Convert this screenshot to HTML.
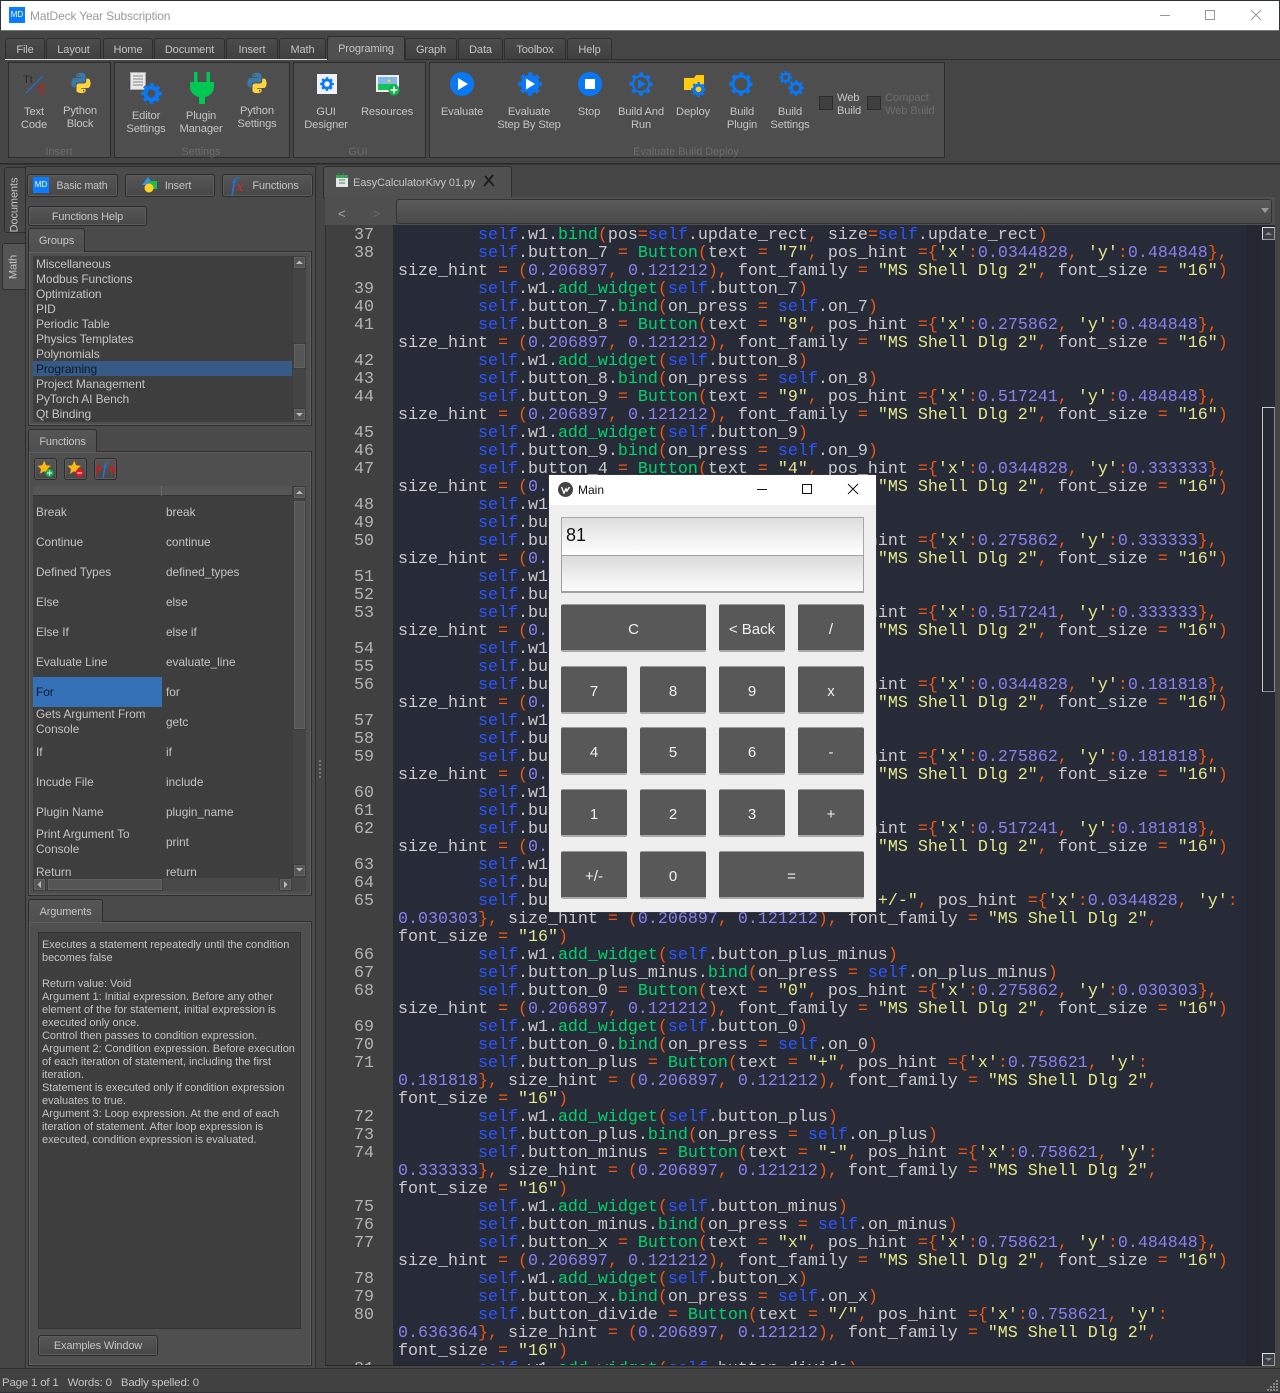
<!DOCTYPE html>
<html><head><meta charset="utf-8"><title>MatDeck Year Subscription</title>
<style>
*{box-sizing:border-box}
html,body{margin:0;padding:0;width:1280px;height:1393px;overflow:hidden;background:#454545}
body{position:relative;font-family:"Liberation Sans",sans-serif;font-size:11.2px;color:#c4c4c4}
div,svg,span.p{position:absolute}
.l{transform:translate(-50%,1px);text-align:center;white-space:pre;line-height:13px;letter-spacing:-.15px}
.t{white-space:pre;line-height:13px;letter-spacing:-.15px;transform:translateY(1px)}
.g{transform:translate(-50%,1px);color:#6c6c6c;white-space:pre;line-height:13px;font-size:10.8px}
.tab{top:38px;height:21px;background:linear-gradient(#4b4b4b,#3f3f3f);border:1px solid #2e2e2e;border-bottom:0;border-radius:3px 3px 0 0;text-align:center;line-height:22px;letter-spacing:-.1px;font-size:11px}
.grp{top:62px;height:96px;background:#4e4e4e;border:1px solid #2d2d2d}
.btn{background:linear-gradient(#565656,#474747);border:1px solid #2c2c2c;border-radius:3px;box-shadow:inset 0 0 0 1px #5c5c5c;text-align:center;letter-spacing:-.15px;font-size:11px}
.box{background:#4f4f4f;border:1px solid #2e2e2e;box-shadow:inset 0 0 0 1px #5e5e5e}
.ptab{background:linear-gradient(#555,#4f4f4f);border:1px solid #2e2e2e;border-bottom:0;border-radius:3px 3px 0 0;text-align:center;letter-spacing:-.15px;font-size:11px}
.it{left:36px;white-space:pre;line-height:15px;letter-spacing:-.1px;font-size:12px}
#ft .t{font-size:11.8px;letter-spacing:0;transform:none}
.sb{background:#555;border:1px solid #3c3c3c;box-shadow:inset 0 0 0 1px #626262}
pre{position:absolute;margin:0;font-family:"Liberation Mono",monospace;font-size:16.67px;line-height:18px}
#code{color:#c9c9c9}
#code a{color:#2c56ff}#code b{color:#00d36b;font-weight:400}#code s{color:#f2560c;text-decoration:none}
#code i{color:#8a80ee;font-style:normal}#code u{color:#e4e88a;text-decoration:none}
.k{background:#585858;border-top:1px solid #999;border-bottom:2px solid #a8a8a8;border-radius:2px;color:#f0f0f0;text-align:center;font-size:15px;line-height:49px}
</style></head><body>
<svg width="0" height="0" style="position:absolute">
<defs>
<symbol id="gear" viewBox="0 0 24 24"><circle cx="12" cy="12" r="7" fill="none" stroke="#0a78f5" stroke-width="4.6"/><circle cx="12" cy="12" r="10" fill="none" stroke="#0a78f5" stroke-width="3.6" stroke-dasharray="3.95 3.9" stroke-dashoffset="2"/></symbol>
<symbol id="py" viewBox="0 0 24 24"><path id="pb" fill="#3c78a9" d="M11.9 1C6.6 1 7 3.3 7 3.3V5.7h5v.8H5S1.6 6.1 1.6 11.6 4.5 16.8 4.5 16.8H6.3V14.3s-.1-2.9 2.9-2.9h5s2.7 0 2.7-2.7V3.9S17.4 1 11.9 1zM9.1 2.6a.9.9 0 1 1 0 1.8.9.9 0 0 1 0-1.8z"/><path fill="#fdd43f" transform="rotate(180 12 12)" d="M11.9 1C6.6 1 7 3.3 7 3.3V5.7h5v.8H5S1.6 6.1 1.6 11.6 4.5 16.8 4.5 16.8H6.3V14.3s-.1-2.9 2.9-2.9h5s2.7 0 2.7-2.7V3.9S17.4 1 11.9 1zM9.1 2.6a.9.9 0 1 1 0 1.8.9.9 0 0 1 0-1.8z"/></symbol>
<symbol id="star" viewBox="0 0 20 20"><path fill="#fdb813" stroke="#b5762a" stroke-width=".6" d="M9 1l2.5 5.6 6 .6-4.5 4 1.3 6L9 14.1 3.700 17.200 5 11.200.5 7.200l6-.6z"/></symbol>
</defs></svg>

<!-- title bar -->
<div style="left:0;top:0;width:1280px;height:31px;background:#fff;border-top:1px solid #2c3338;border-left:1px solid #2c3338;border-right:1px solid #2c3338;border-bottom:1px solid #777"></div>
<div style="left:9px;top:7px;width:16px;height:16px;background:#0a7cff;color:#fff;font-size:8px;line-height:16px;text-align:center">MD</div>
<div class="t" style="left:30px;top:9px;font-size:12px;color:#9a9a9a">MatDeck Year Subscription</div>
<svg style="left:1150px;top:5px" width="125" height="22" fill="none" stroke="#999" stroke-width="1"><path d="M10 10.500h10"/><rect x="55.500" y="5.500" width="9" height="9"/><path d="M101 5l10 10M111 5l-10 10"/></svg>

<!-- ribbon tabs -->
<div style="left:5px;top:59px;width:322px;height:1px;background:#ddd"></div>
<div style="left:404px;top:59px;width:876px;height:1px;background:#2e2e2e"></div>
<div class="tab" style="left:5px;width:40px">File</div>
<div class="tab" style="left:46px;width:55px">Layout</div>
<div class="tab" style="left:103px;width:50px">Home</div>
<div class="tab" style="left:154px;width:71px">Document</div>
<div class="tab" style="left:226px;width:52px">Insert</div>
<div class="tab" style="left:279px;width:47px">Math</div>
<div class="tab" style="left:327px;top:36px;width:78px;height:24px;background:#505050;line-height:24px;z-index:2">Programing</div>
<div class="tab" style="left:405px;width:52px">Graph</div>
<div class="tab" style="left:458px;width:45px">Data</div>
<div class="tab" style="left:504px;width:62px">Toolbox</div>
<div class="tab" style="left:567px;width:45px">Help</div>

<!-- ribbon -->
<div class="grp" style="left:8px;width:103px"></div>
<div class="grp" style="left:114px;width:176px"></div>
<div class="grp" style="left:293px;width:133px"></div>
<div class="grp" style="left:429px;width:516px"></div>
<div style="left:0;top:163px;width:1280px;height:2px;background:#353535;border-top:1px solid #2a2a2a"></div>

<!-- icons -->
<svg style="left:22px;top:72px" width="26" height="24"><text x="1" y="11" font-family="Liberation Sans" font-size="11" fill="#2b2b33">Tt</text><path d="M4 21L21 4" stroke="#1f6fe0" stroke-width="1.200"/><text x="16" y="20" font-family="Liberation Sans" font-size="11" fill="#d01818">{}</text></svg>
<svg style="left:70px;top:72px" width="22" height="22"><use href="#py"/></svg>
<svg style="left:130px;top:72px" width="34" height="34"><rect x=".500" y=".500" width="15" height="17" fill="#e8e8e8" stroke="#aaa"/><path d="M3 4h10M3 7h10M3 10h10M3 13h10" stroke="#888"/><use href="#gear" x="11" y="11" width="21" height="21"/></svg>
<svg style="left:190px;top:71px" width="24" height="34"><path fill="#00c853" d="M4 1h3.500v10h9V1H20v10h4v5c0 5-4 9-9 10v7h-6v-7C4 25 0 21 0 16v-5h4z"/></svg>
<svg style="left:246px;top:72px" width="22" height="22"><use href="#py"/></svg>
<svg style="left:317px;top:74px" width="20" height="20"><rect width="20" height="20" fill="#eef2f6"/><use href="#gear" x="3" y="3" width="14" height="14"/></svg>
<svg style="left:376px;top:75px" width="25" height="22"><rect width="23" height="17" fill="#eee"/><rect x="2" y="2" width="19" height="7" fill="#7fb8ea"/><rect x="2" y="9" width="19" height="6" fill="#16c25a"/><circle cx="13" cy="6" r="1.500" fill="#f4d24a"/><circle cx="18" cy="15" r="5.500" fill="#0fb14d"/><path d="M18 11.500v7M14.500 15h7" stroke="#fff" stroke-width="1.500"/></svg>
<svg style="left:450px;top:72px" width="24" height="24"><circle cx="12" cy="12" r="12" fill="#0a78f5"/><path d="M8 6l10 6-10 6z" fill="#fff"/></svg>
<svg style="left:518px;top:72px" width="24" height="24"><use href="#gear"/><circle cx="12" cy="12" r="8" fill="#0a78f5"/><path d="M8 6.500l9 5.500-9 5.500z" fill="#fff"/></svg>
<svg style="left:578px;top:72px" width="24" height="24"><circle cx="12" cy="12" r="12" fill="#0a78f5"/><rect x="7" y="7" width="10" height="10" fill="#fff"/></svg>
<svg style="left:629px;top:72px" width="24" height="24"><circle cx="12" cy="12" r="8" fill="none" stroke="#0a78f5" stroke-width="2"/><circle cx="12" cy="12" r="10" fill="none" stroke="#0a78f5" stroke-width="3.400" stroke-dasharray="3.950 3.900" stroke-dashoffset="2"/><path d="M9 7.500l7.500 4.500-7.500 4.500z" fill="#0a78f5"/></svg>
<svg style="left:684px;top:74px" width="24" height="26"><path fill="#ffcc11" d="M0 4h10l2-3h8v15H0z"/><use href="#gear" x="7" y="8" width="15" height="15"/><circle cx="14.500" cy="15.500" r="2.700" fill="#ffcc11"/></svg>
<svg style="left:729px;top:72px" width="24" height="24"><circle cx="12" cy="12" r="8" fill="none" stroke="#0a78f5" stroke-width="3"/><circle cx="12" cy="12" r="10" fill="none" stroke="#0a78f5" stroke-width="3.400" stroke-dasharray="3.950 3.900" stroke-dashoffset="2"/></svg>
<svg style="left:779px;top:71px" width="26" height="26"><use href="#gear" x="0" y="0" width="13" height="13"/><use href="#gear" x="9" y="9" width="16" height="16"/></svg>

<div style="left:819px;top:96px;width:14px;height:14px;background:#3f3f3f;border:1px solid #2c2c2c"></div>
<div style="left:867px;top:96px;width:14px;height:14px;background:#3f3f3f;border:1px solid #2c2c2c"></div>

<div class="l" style="left:34px;top:105px">Text
Code</div>
<div class="l" style="left:80px;top:104px">Python
Block</div>
<div class="l" style="left:146px;top:109px">Editor
Settings</div>
<div class="l" style="left:201px;top:109px">Plugin
Manager</div>
<div class="l" style="left:257px;top:104px">Python
Settings</div>
<div class="l" style="left:326px;top:105px">GUI
Designer</div>
<div class="l" style="left:387px;top:105px">Resources</div>
<div class="l" style="left:462px;top:105px">Evaluate</div>
<div class="l" style="left:529px;top:105px">Evaluate
Step By Step</div>
<div class="l" style="left:589px;top:105px">Stop</div>
<div class="l" style="left:641px;top:105px">Build And
Run</div>
<div class="l" style="left:693px;top:105px">Deploy</div>
<div class="l" style="left:742px;top:105px">Build
Plugin</div>
<div class="l" style="left:790px;top:105px">Build
Settings</div>
<div class="t" style="left:837px;top:91px">Web
Build</div>
<div class="t" style="left:885px;top:91px;color:#6c6c6c">Compact
Web Build</div>
<div class="g" style="left:59px;top:145px">Insert</div>
<div class="g" style="left:201px;top:145px">Settings</div>
<div class="g" style="left:358px;top:145px">GUI</div>
<div class="g" style="left:686px;top:145px">Evaluate Build Deploy</div>

<!-- side tabs -->
<div style="left:4px;top:167px;width:21px;height:66px;background:#474747;border:1px solid #2e2e2e;border-right:0;border-radius:3px 0 0 3px"></div>
<div style="left:2px;top:243px;width:23px;height:47px;background:#555;border:1px solid #2e2e2e;border-right:0;border-radius:3px 0 0 3px"></div>
<div class="t" style="left:15px;top:205px;transform:translate(-50%,-50%) rotate(-90deg);letter-spacing:-.1px;font-size:11px">Documents</div>
<div class="t" style="left:14px;top:267px;transform:translate(-50%,-50%) rotate(-90deg)">Math</div>

<!-- left pane -->
<div style="left:25px;top:166px;width:291px;height:1203px;background:#4a4a4a;border:1px solid #2e2e2e"></div>
<div class="btn" style="left:27px;top:174px;width:91px;height:23px;line-height:23px;padding-left:19px;font-size:10.6px">Basic math</div>
<div style="left:33px;top:177px;width:16px;height:16px;background:#0a7cff;color:#fff;font-size:8px;line-height:16px;text-align:center">MD</div>
<div class="btn" style="left:125px;top:174px;width:90px;height:23px;line-height:23px;padding-left:16px">Insert</div>
<svg style="left:141px;top:176px" width="18" height="18"><path d="M7 1l6 8H1z" fill="#3d8bf0"/><rect x="7" y="5" width="9" height="8" fill="#1db954"/><circle cx="8" cy="12" r="4.500" fill="#ffd21f"/></svg>
<div class="btn" style="left:222px;top:174px;width:91px;height:23px;line-height:23px;padding-left:16px">Functions</div>
<div style="left:231px;top:175px;font:italic 20px 'Liberation Serif',serif;color:#1e73e8;line-height:20px">f<span style="color:#d42a2a;font-size:15px">x</span></div>
<div class="btn" style="left:28px;top:206px;width:119px;height:20px;line-height:20px">Functions Help</div>

<div class="ptab" style="left:28px;top:228px;width:57px;height:24px;line-height:24px;z-index:2">Groups</div>
<div class="box" style="left:28px;top:251px;width:284px;height:175px"></div>
<div style="left:33px;top:256px;width:273px;height:166px;background:#3e3e3e"></div>
<div style="left:33px;top:361px;width:259px;height:15px;background:#365a85"></div>
<div class="it" style="top:257px">Miscellaneous</div>
<div class="it" style="top:272px">Modbus Functions</div>
<div class="it" style="top:287px">Optimization</div>
<div class="it" style="top:302px">PID</div>
<div class="it" style="top:317px">Periodic Table</div>
<div class="it" style="top:332px">Physics Templates</div>
<div class="it" style="top:347px">Polynomials</div>
<div class="it" style="top:362px;color:#0c1a2c">Programing</div>
<div class="it" style="top:377px">Project Management</div>
<div class="it" style="top:392px">PyTorch AI Bench</div>
<div class="it" style="top:407px">Qt Binding</div>
<div style="left:293px;top:256px;width:13px;height:166px;background:#444"></div>
<div class="sb" style="left:293px;top:256px;width:13px;height:13px"></div>
<div class="sb" style="left:293px;top:343px;width:13px;height:26px"></div>
<div class="sb" style="left:293px;top:408px;width:13px;height:13px"></div>
<svg style="left:293px;top:256px" width="13" height="166" fill="#bbb"><path d="M3 8l3.500-3.500L10 8zM3 157l3.500 3.500L10 157z"/></svg>

<div class="ptab" style="left:28px;top:429px;width:69px;height:23px;line-height:24px;z-index:2">Functions</div>
<div class="box" style="left:28px;top:451px;width:284px;height:445px"></div>
<div class="btn" style="left:34px;top:458px;width:23px;height:22px"></div>
<div class="btn" style="left:64px;top:458px;width:23px;height:22px"></div>
<div class="btn" style="left:94px;top:458px;width:23px;height:22px"></div>
<svg style="left:37px;top:460px" width="18" height="18"><use href="#star" width="16" height="16"/><circle cx="12.500" cy="13" r="4" fill="#0fb14d"/><path d="M12.500 10.500v5M10 13h5" stroke="#fff"/></svg>
<svg style="left:67px;top:460px" width="18" height="18"><use href="#star" width="16" height="16"/><circle cx="12.500" cy="13" r="4" fill="#e8141e"/><path d="M10 13h5" stroke="#fff"/></svg>
<svg style="left:96px;top:460px" width="20" height="18"><path d="M1 3v12M18 3v12" stroke="#d61a1a"/><path d="M1 9l4-3v6zM18 9l-4-3v6z" fill="#d61a1a"/><text x="6" y="15" font-family="Liberation Serif" font-style="italic" font-size="18" fill="#1e73e8">f</text></svg>

<div style="left:33px;top:486px;width:273px;height:392px;background:#3e3e3e;overflow:hidden" id="ft">
<div style="left:0;top:0;width:259px;height:10px;background:#555;border-bottom:1px solid #333"></div>
<div style="left:128px;top:0;width:1px;height:10px;background:#6a6a6a"></div>
<div style="left:0;top:191px;width:129px;height:30px;background:#3470b5"></div>
<div class="t" style="left:3px;top:20px">Break</div><div class="t" style="left:133px;top:20px">break</div>
<div class="t" style="left:3px;top:50px">Continue</div><div class="t" style="left:133px;top:50px">continue</div>
<div class="t" style="left:3px;top:80px">Defined Types</div><div class="t" style="left:133px;top:80px">defined_types</div>
<div class="t" style="left:3px;top:110px">Else</div><div class="t" style="left:133px;top:110px">else</div>
<div class="t" style="left:3px;top:140px">Else If</div><div class="t" style="left:133px;top:140px">else if</div>
<div class="t" style="left:3px;top:170px">Evaluate Line</div><div class="t" style="left:133px;top:170px">evaluate_line</div>
<div class="t" style="left:3px;top:200px;color:#0c1a2c">For</div><div class="t" style="left:133px;top:200px">for</div>
<div class="t" style="left:3px;top:221px;line-height:15px">Gets Argument From
Console</div><div class="t" style="left:133px;top:230px">getc</div>
<div class="t" style="left:3px;top:260px">If</div><div class="t" style="left:133px;top:260px">if</div>
<div class="t" style="left:3px;top:290px">Incude File</div><div class="t" style="left:133px;top:290px">include</div>
<div class="t" style="left:3px;top:320px">Plugin Name</div><div class="t" style="left:133px;top:320px">plugin_name</div>
<div class="t" style="left:3px;top:341px;line-height:15px">Print Argument To
Console</div><div class="t" style="left:133px;top:350px">print</div>
<div class="t" style="left:3px;top:380px">Return</div><div class="t" style="left:133px;top:380px">return</div>
</div>
<div style="left:293px;top:486px;width:13px;height:392px;background:#444"></div>
<div class="sb" style="left:293px;top:486px;width:13px;height:13px"></div>
<div class="sb" style="left:293px;top:500px;width:13px;height:230px"></div>
<div class="sb" style="left:293px;top:864px;width:13px;height:13px"></div>
<svg style="left:293px;top:486px" width="13" height="392" fill="#bbb"><path d="M3 8l3.500-3.500L10 8zM3 382l3.500 3.500L10 382z"/></svg>
<div style="left:33px;top:878px;width:273px;height:13px;background:#484848"></div>
<div class="sb" style="left:33px;top:878px;width:13px;height:13px"></div>
<div class="sb" style="left:47px;top:878px;width:116px;height:13px"></div>
<div class="sb" style="left:279px;top:878px;width:13px;height:13px"></div>
<svg style="left:33px;top:878px" width="260" height="13" fill="#bbb"><path d="M8 3L4.500 6.500 8 10zM251 3l3.500 3.500L251 10z"/></svg>

<div class="ptab" style="left:28px;top:899px;width:75px;height:23px;line-height:24px;z-index:2">Arguments</div>
<div class="box" style="left:28px;top:921px;width:284px;height:445px"></div>
<div style="left:38px;top:932px;width:263px;height:397px;background:#3e3e3e;border:1px solid #333"></div>
<div class="t" style="left:42px;top:938px;font-size:11px;letter-spacing:-.03px">Executes a statement repeatedly until the condition
becomes false

Return value: Void
Argument 1: Initial expression. Before any other
element of the for statement, initial expression is
executed only once.
Control then passes to condition expression.
Argument 2: Condition expression. Before execution
of each iteration of statement, including the first
iteration.
Statement is executed only if condition expression
evaluates to true.
Argument 3: Loop expression. At the end of each
iteration of statement. After loop expression is
executed, condition expression is evaluated.</div>
<div class="btn" style="left:38px;top:1335px;width:120px;height:21px;line-height:21px">Examples Window</div>

<!-- status -->
<div style="left:0;top:1368px;width:1280px;height:25px;background:#414141;border-top:1px solid #2e2e2e;border-bottom:1px solid #2c3338"></div>
<div class="t" style="left:2px;top:1376px;font-size:11.4px">Page 1 of 1   Words: 0   Badly spelled: 0</div>
<svg style="left:1266px;top:1379px" width="14" height="12" fill="#888"><path d="M10 1h2v2h-2zM7 4h2v2H7zM10 4h2v2h-2zM4 7h2v2H4zM7 7h2v2H7zM10 7h2v2h-2zM1 10h2v2H1zM4 10h2v2H4zM7 10h2v2H7zM10 10h2v2h-2z"/></svg>
<svg style="left:318px;top:760px" width="4" height="18" fill="#777"><path d="M1 0h2v2H1zM1 4h2v2H1zM1 8h2v2H1zM1 12h2v2H1zM1 16h2v2H1z"/></svg>

<!-- right: doc tab -->
<div style="left:323px;top:166px;width:189px;height:32px;background:#505050;border:1px solid #2e2e2e;border-radius:3px 3px 0 0;z-index:1"></div>
<svg style="left:334px;top:172px;z-index:2" width="16" height="16"><path d="M2 3h12v12H2z" fill="#e6e6e6"/><path d="M2 3h12v3H2z" fill="#39a85a"/><path d="M4 1l2 4M9 1l2 4M5 8h6M5 11h6" stroke="#3c8a50"/></svg>
<div class="t" style="left:353px;top:176px;z-index:2;letter-spacing:-.1px;font-size:11px">EasyCalculatorKivy 01.py</div>
<svg style="left:482px;top:174px;z-index:2" width="14" height="14" stroke="#1c1c1c" stroke-width="1.800"><path d="M2 12L11 1M3 2l9 10"/></svg>
<div style="left:325px;top:197px;width:950px;height:28px;background:#4f4f4f;z-index:2"></div>
<div style="left:396px;top:199px;width:876px;height:25px;background:linear-gradient(#5a5a5a,#4a4a4a);border:1px solid #333;border-radius:3px;z-index:2"></div>
<div class="t" style="left:338px;top:206px;font-size:13px;color:#aaa;z-index:3">&lt;</div>
<div class="t" style="left:373px;top:206px;font-size:13px;color:#6a6a6a;z-index:3">&gt;</div>
<svg style="left:1260px;top:208px;z-index:3" width="10" height="6" fill="#999"><path d="M1 0h8L5 5z"/></svg>

<!-- code pane -->
<div style="left:325px;top:225px;width:950px;height:1141px;background:#272a37;overflow:hidden;border-left:1px solid #2e2e2e;border-bottom:1px solid #222">
<div style="left:0;top:0;width:67px;height:1141px;background:#404040"></div>
<div style="left:920px;top:0;width:16px;height:1141px;background:#242731"></div>
<div style="left:936px;top:0;width:14px;height:1141px;background:#262934"></div>
<pre style="left:0;top:2px;width:48px;text-align:right;color:#b4b4b4">37
38

39
40
41

42
43
44

45
46
47

48
49
50

51
52
53

54
55
56

57
58
59

60
61
62

63
64
65


66
67
68

69
70
71


72
73
74


75
76
77

78
79
80


81</pre>
<pre id="code" style="left:72px;top:2px">        <a>self</a>.w1.<b>bind</b><s>(</s>pos<s>=</s><a>self</a>.update_rect<s>,</s> size<s>=</s><a>self</a>.update_rect<s>)</s>
        <a>self</a>.button_7 <s>=</s> <b>Button</b><s>(</s>text <s>=</s> <u>"7"</u><s>,</s> pos_hint <s>={</s><u>'x'</u><s>:</s><i>0.0344828</i><s>,</s> <u>'y'</u><s>:</s><i>0.484848</i><s>},</s>
size_hint <s>=</s> <s>(</s><i>0.206897</i><s>,</s> <i>0.121212</i><s>),</s> font_family <s>=</s> <u>"MS Shell Dlg 2"</u><s>,</s> font_size <s>=</s> <u>"16"</u><s>)</s>
        <a>self</a>.w1.<b>add_widget</b><s>(</s><a>self</a>.button_7<s>)</s>
        <a>self</a>.button_7.<b>bind</b><s>(</s>on_press <s>=</s> <a>self</a>.on_7<s>)</s>
        <a>self</a>.button_8 <s>=</s> <b>Button</b><s>(</s>text <s>=</s> <u>"8"</u><s>,</s> pos_hint <s>={</s><u>'x'</u><s>:</s><i>0.275862</i><s>,</s> <u>'y'</u><s>:</s><i>0.484848</i><s>},</s>
size_hint <s>=</s> <s>(</s><i>0.206897</i><s>,</s> <i>0.121212</i><s>),</s> font_family <s>=</s> <u>"MS Shell Dlg 2"</u><s>,</s> font_size <s>=</s> <u>"16"</u><s>)</s>
        <a>self</a>.w1.<b>add_widget</b><s>(</s><a>self</a>.button_8<s>)</s>
        <a>self</a>.button_8.<b>bind</b><s>(</s>on_press <s>=</s> <a>self</a>.on_8<s>)</s>
        <a>self</a>.button_9 <s>=</s> <b>Button</b><s>(</s>text <s>=</s> <u>"9"</u><s>,</s> pos_hint <s>={</s><u>'x'</u><s>:</s><i>0.517241</i><s>,</s> <u>'y'</u><s>:</s><i>0.484848</i><s>},</s>
size_hint <s>=</s> <s>(</s><i>0.206897</i><s>,</s> <i>0.121212</i><s>),</s> font_family <s>=</s> <u>"MS Shell Dlg 2"</u><s>,</s> font_size <s>=</s> <u>"16"</u><s>)</s>
        <a>self</a>.w1.<b>add_widget</b><s>(</s><a>self</a>.button_9<s>)</s>
        <a>self</a>.button_9.<b>bind</b><s>(</s>on_press <s>=</s> <a>self</a>.on_9<s>)</s>
        <a>self</a>.button_4 <s>=</s> <b>Button</b><s>(</s>text <s>=</s> <u>"4"</u><s>,</s> pos_hint <s>={</s><u>'x'</u><s>:</s><i>0.0344828</i><s>,</s> <u>'y'</u><s>:</s><i>0.333333</i><s>},</s>
size_hint <s>=</s> <s>(</s><i>0.206897</i><s>,</s> <i>0.121212</i><s>),</s> font_family <s>=</s> <u>"MS Shell Dlg 2"</u><s>,</s> font_size <s>=</s> <u>"16"</u><s>)</s>
        <a>self</a>.w1.<b>add_widget</b><s>(</s><a>self</a>.button_4<s>)</s>
        <a>self</a>.button_4.<b>bind</b><s>(</s>on_press <s>=</s> <a>self</a>.on_4<s>)</s>
        <a>self</a>.button_5 <s>=</s> <b>Button</b><s>(</s>text <s>=</s> <u>"5"</u><s>,</s> pos_hint <s>={</s><u>'x'</u><s>:</s><i>0.275862</i><s>,</s> <u>'y'</u><s>:</s><i>0.333333</i><s>},</s>
size_hint <s>=</s> <s>(</s><i>0.206897</i><s>,</s> <i>0.121212</i><s>),</s> font_family <s>=</s> <u>"MS Shell Dlg 2"</u><s>,</s> font_size <s>=</s> <u>"16"</u><s>)</s>
        <a>self</a>.w1.<b>add_widget</b><s>(</s><a>self</a>.button_5<s>)</s>
        <a>self</a>.button_5.<b>bind</b><s>(</s>on_press <s>=</s> <a>self</a>.on_5<s>)</s>
        <a>self</a>.button_6 <s>=</s> <b>Button</b><s>(</s>text <s>=</s> <u>"6"</u><s>,</s> pos_hint <s>={</s><u>'x'</u><s>:</s><i>0.517241</i><s>,</s> <u>'y'</u><s>:</s><i>0.333333</i><s>},</s>
size_hint <s>=</s> <s>(</s><i>0.206897</i><s>,</s> <i>0.121212</i><s>),</s> font_family <s>=</s> <u>"MS Shell Dlg 2"</u><s>,</s> font_size <s>=</s> <u>"16"</u><s>)</s>
        <a>self</a>.w1.<b>add_widget</b><s>(</s><a>self</a>.button_6<s>)</s>
        <a>self</a>.button_6.<b>bind</b><s>(</s>on_press <s>=</s> <a>self</a>.on_6<s>)</s>
        <a>self</a>.button_1 <s>=</s> <b>Button</b><s>(</s>text <s>=</s> <u>"1"</u><s>,</s> pos_hint <s>={</s><u>'x'</u><s>:</s><i>0.0344828</i><s>,</s> <u>'y'</u><s>:</s><i>0.181818</i><s>},</s>
size_hint <s>=</s> <s>(</s><i>0.206897</i><s>,</s> <i>0.121212</i><s>),</s> font_family <s>=</s> <u>"MS Shell Dlg 2"</u><s>,</s> font_size <s>=</s> <u>"16"</u><s>)</s>
        <a>self</a>.w1.<b>add_widget</b><s>(</s><a>self</a>.button_1<s>)</s>
        <a>self</a>.button_1.<b>bind</b><s>(</s>on_press <s>=</s> <a>self</a>.on_1<s>)</s>
        <a>self</a>.button_2 <s>=</s> <b>Button</b><s>(</s>text <s>=</s> <u>"2"</u><s>,</s> pos_hint <s>={</s><u>'x'</u><s>:</s><i>0.275862</i><s>,</s> <u>'y'</u><s>:</s><i>0.181818</i><s>},</s>
size_hint <s>=</s> <s>(</s><i>0.206897</i><s>,</s> <i>0.121212</i><s>),</s> font_family <s>=</s> <u>"MS Shell Dlg 2"</u><s>,</s> font_size <s>=</s> <u>"16"</u><s>)</s>
        <a>self</a>.w1.<b>add_widget</b><s>(</s><a>self</a>.button_2<s>)</s>
        <a>self</a>.button_2.<b>bind</b><s>(</s>on_press <s>=</s> <a>self</a>.on_2<s>)</s>
        <a>self</a>.button_3 <s>=</s> <b>Button</b><s>(</s>text <s>=</s> <u>"3"</u><s>,</s> pos_hint <s>={</s><u>'x'</u><s>:</s><i>0.517241</i><s>,</s> <u>'y'</u><s>:</s><i>0.181818</i><s>},</s>
size_hint <s>=</s> <s>(</s><i>0.206897</i><s>,</s> <i>0.121212</i><s>),</s> font_family <s>=</s> <u>"MS Shell Dlg 2"</u><s>,</s> font_size <s>=</s> <u>"16"</u><s>)</s>
        <a>self</a>.w1.<b>add_widget</b><s>(</s><a>self</a>.button_3<s>)</s>
        <a>self</a>.button_3.<b>bind</b><s>(</s>on_press <s>=</s> <a>self</a>.on_3<s>)</s>
        <a>self</a>.button_plus_minus <s>=</s> <b>Button</b><s>(</s>text <s>=</s> <u>"+/-"</u><s>,</s> pos_hint <s>={</s><u>'x'</u><s>:</s><i>0.0344828</i><s>,</s> <u>'y'</u><s>:</s>
<i>0.030303</i><s>},</s> size_hint <s>=</s> <s>(</s><i>0.206897</i><s>,</s> <i>0.121212</i><s>),</s> font_family <s>=</s> <u>"MS Shell Dlg 2"</u><s>,</s>
font_size <s>=</s> <u>"16"</u><s>)</s>
        <a>self</a>.w1.<b>add_widget</b><s>(</s><a>self</a>.button_plus_minus<s>)</s>
        <a>self</a>.button_plus_minus.<b>bind</b><s>(</s>on_press <s>=</s> <a>self</a>.on_plus_minus<s>)</s>
        <a>self</a>.button_0 <s>=</s> <b>Button</b><s>(</s>text <s>=</s> <u>"0"</u><s>,</s> pos_hint <s>={</s><u>'x'</u><s>:</s><i>0.275862</i><s>,</s> <u>'y'</u><s>:</s><i>0.030303</i><s>},</s>
size_hint <s>=</s> <s>(</s><i>0.206897</i><s>,</s> <i>0.121212</i><s>),</s> font_family <s>=</s> <u>"MS Shell Dlg 2"</u><s>,</s> font_size <s>=</s> <u>"16"</u><s>)</s>
        <a>self</a>.w1.<b>add_widget</b><s>(</s><a>self</a>.button_0<s>)</s>
        <a>self</a>.button_0.<b>bind</b><s>(</s>on_press <s>=</s> <a>self</a>.on_0<s>)</s>
        <a>self</a>.button_plus <s>=</s> <b>Button</b><s>(</s>text <s>=</s> <u>"+"</u><s>,</s> pos_hint <s>={</s><u>'x'</u><s>:</s><i>0.758621</i><s>,</s> <u>'y'</u><s>:</s>
<i>0.181818</i><s>},</s> size_hint <s>=</s> <s>(</s><i>0.206897</i><s>,</s> <i>0.121212</i><s>),</s> font_family <s>=</s> <u>"MS Shell Dlg 2"</u><s>,</s>
font_size <s>=</s> <u>"16"</u><s>)</s>
        <a>self</a>.w1.<b>add_widget</b><s>(</s><a>self</a>.button_plus<s>)</s>
        <a>self</a>.button_plus.<b>bind</b><s>(</s>on_press <s>=</s> <a>self</a>.on_plus<s>)</s>
        <a>self</a>.button_minus <s>=</s> <b>Button</b><s>(</s>text <s>=</s> <u>"-"</u><s>,</s> pos_hint <s>={</s><u>'x'</u><s>:</s><i>0.758621</i><s>,</s> <u>'y'</u><s>:</s>
<i>0.333333</i><s>},</s> size_hint <s>=</s> <s>(</s><i>0.206897</i><s>,</s> <i>0.121212</i><s>),</s> font_family <s>=</s> <u>"MS Shell Dlg 2"</u><s>,</s>
font_size <s>=</s> <u>"16"</u><s>)</s>
        <a>self</a>.w1.<b>add_widget</b><s>(</s><a>self</a>.button_minus<s>)</s>
        <a>self</a>.button_minus.<b>bind</b><s>(</s>on_press <s>=</s> <a>self</a>.on_minus<s>)</s>
        <a>self</a>.button_x <s>=</s> <b>Button</b><s>(</s>text <s>=</s> <u>"x"</u><s>,</s> pos_hint <s>={</s><u>'x'</u><s>:</s><i>0.758621</i><s>,</s> <u>'y'</u><s>:</s><i>0.484848</i><s>},</s>
size_hint <s>=</s> <s>(</s><i>0.206897</i><s>,</s> <i>0.121212</i><s>),</s> font_family <s>=</s> <u>"MS Shell Dlg 2"</u><s>,</s> font_size <s>=</s> <u>"16"</u><s>)</s>
        <a>self</a>.w1.<b>add_widget</b><s>(</s><a>self</a>.button_x<s>)</s>
        <a>self</a>.button_x.<b>bind</b><s>(</s>on_press <s>=</s> <a>self</a>.on_x<s>)</s>
        <a>self</a>.button_divide <s>=</s> <b>Button</b><s>(</s>text <s>=</s> <u>"/"</u><s>,</s> pos_hint <s>={</s><u>'x'</u><s>:</s><i>0.758621</i><s>,</s> <u>'y'</u><s>:</s>
<i>0.636364</i><s>},</s> size_hint <s>=</s> <s>(</s><i>0.206897</i><s>,</s> <i>0.121212</i><s>),</s> font_family <s>=</s> <u>"MS Shell Dlg 2"</u><s>,</s>
font_size <s>=</s> <u>"16"</u><s>)</s>
        <a>self</a>.w1.<b>add_widget</b><s>(</s><a>self</a>.button_divide<s>)</s></pre>
</div>

<!-- code scrollbar -->
<div style="left:1262px;top:227px;width:13px;height:13px;background:#3c3f48;border:1px solid #ddd;border-right-color:#999;border-bottom-color:#999"></div>
<svg style="left:1264px;top:229px" width="9" height="9" fill="#8a8a8a"><path d="M1 6l3.500-3L8 6z"/></svg>
<div style="left:1262px;top:407px;width:13px;height:285px;background:#262934;border:1px solid #ccc;border-right-color:#888;border-bottom-color:#888"></div>
<div style="left:1262px;top:1353px;width:13px;height:13px;background:#3c3f48;border:1px solid #ddd;border-right-color:#999;border-bottom-color:#999"></div>
<svg style="left:1264px;top:1355px" width="9" height="9" fill="#8a8a8a"><path d="M1 3l3.500 3L8 3z"/></svg>
<div style="left:1275px;top:197px;width:5px;height:1171px;background:#454545"></div>

<!-- calculator dialog -->
<div style="left:549px;top:475px;width:327px;height:437px;background:#efefef;z-index:5;box-shadow:0 0 1px #666">
<div style="left:0;top:0;width:327px;height:30px;background:#fff"></div>
<svg style="left:9px;top:7px" width="15" height="15"><circle cx="7.500" cy="7.500" r="7.500" fill="#444"/><path d="M3.500 5l2.500 6 2-4 1 2 2.500-4" fill="none" stroke="#fff" stroke-width="1.400"/></svg>
<div class="t" style="left:29px;top:8px;font-size:12px;color:#111;letter-spacing:0">Main</div>
<svg style="left:200px;top:4px" width="120" height="20" fill="none" stroke="#111"><path d="M8 10.500h10"/><rect x="53.500" y="5.500" width="9" height="9"/><path d="M99 5l10 10M109 5l-10 10"/></svg>
<div style="left:12px;top:42px;width:303px;height:39px;background:linear-gradient(#dedede,#f2f2f2 60%,#fff);border:1px solid #a8a8a8;font-size:18px;color:#111;line-height:35px;padding-left:4px">81</div>
<div style="left:12px;top:80px;width:303px;height:38px;background:linear-gradient(#dadada,#efefef 60%,#fbfbfb);border:1px solid #a0a0a0;border-bottom-width:2px"></div>
<div class="k" style="left:12px;top:129px;width:145px;height:48px">C</div>
<div class="k" style="left:170px;top:129px;width:66px;height:48px">&lt; Back</div>
<div class="k" style="left:249px;top:129px;width:66px;height:48px">/</div>
<div class="k" style="left:12px;top:191px;width:66px;height:48px">7</div>
<div class="k" style="left:91px;top:191px;width:66px;height:48px">8</div>
<div class="k" style="left:170px;top:191px;width:66px;height:48px">9</div>
<div class="k" style="left:249px;top:191px;width:66px;height:48px">x</div>
<div class="k" style="left:12px;top:252px;width:66px;height:48px">4</div>
<div class="k" style="left:91px;top:252px;width:66px;height:48px">5</div>
<div class="k" style="left:170px;top:252px;width:66px;height:48px">6</div>
<div class="k" style="left:249px;top:252px;width:66px;height:48px">-</div>
<div class="k" style="left:12px;top:314px;width:66px;height:48px">1</div>
<div class="k" style="left:91px;top:314px;width:66px;height:48px">2</div>
<div class="k" style="left:170px;top:314px;width:66px;height:48px">3</div>
<div class="k" style="left:249px;top:314px;width:66px;height:48px">+</div>
<div class="k" style="left:12px;top:376px;width:66px;height:48px">+/-</div>
<div class="k" style="left:91px;top:376px;width:66px;height:48px">0</div>
<div class="k" style="left:170px;top:376px;width:145px;height:48px">=</div>
</div>
</body></html>
